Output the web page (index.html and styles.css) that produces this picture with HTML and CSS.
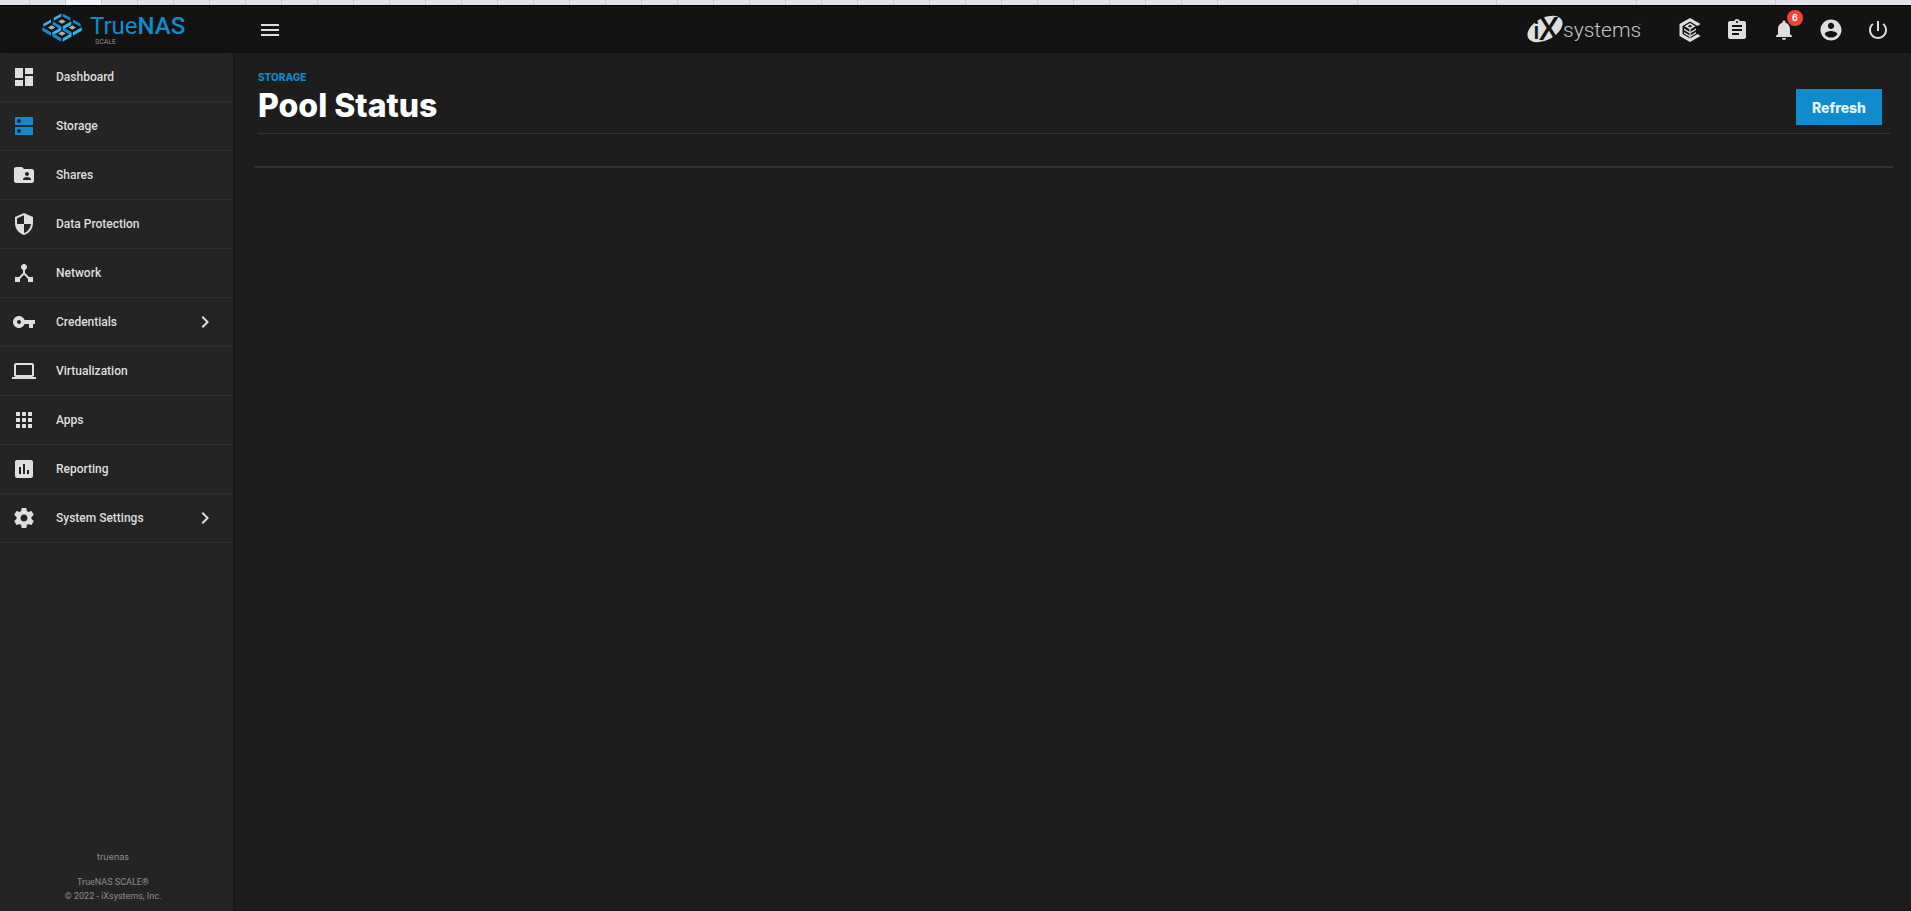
FILE: index.html
```html
<!DOCTYPE html>
<html lang="en">
<head>
  <meta charset="UTF-8" />
  <meta name="viewport" content="width=device-width, initial-scale=1.0"/>
  <title>TrueNAS - Pool Status</title>
  <link rel="stylesheet" href="styles.css">
</head>
<body>
  <div class="tab-strip" aria-hidden="true">
    <i></i><i></i><i class="current"></i><i></i><i></i><i></i><i></i><i></i><i></i><i></i>
    <i></i><i></i><i></i><i></i><i></i><i></i><i></i><i></i><i></i><i></i>
    <i></i><i></i><i></i><i></i><i></i><i></i><i></i><i></i><i></i><i></i>
    <i></i><i></i><i></i><i></i><i></i><i></i><i></i><i></i><i></i>
  </div>

  <header class="topbar">
    <a class="brand" href="#" aria-label="TrueNAS SCALE">
      <svg class="brand-mark" viewBox="0 0 120 86">
        <defs>
          <g id="cell">
            <path fill="#118ed3" d="M-28-1-2 14v11L-28 10z"/>
            <path fill="#31b6ea" d="M28-1 2 14v11l26-15z"/>
            <path fill="#aeadae" d="M0-7 11 0 0 7-11 0z"/>
          </g>
        </defs>
        <path fill="#31b6ea" d="M35 23 58 10V1L35 14zM4 41l23-13v-9L4 32z"/>
        <path fill="#118ed3" d="M85 23 62 10V1l23 13zM116 41 93 28v-9l23 13z"/>
        <use href="#cell" x="60" y="25"/>
        <use href="#cell" x="29" y="43"/>
        <use href="#cell" x="91" y="43"/>
        <use href="#cell" x="60" y="61"/>
      </svg>
      <span class="brand-text">
        <span class="brand-name">True<b>NAS</b></span>
        <span class="brand-edition">SCALE</span>
      </span>
    </a>
    <button class="icon-btn menu-btn" aria-label="Toggle menu">
      <svg viewBox="0 0 24 24"><path d="M3 18h18v-2H3v2zm0-5h18v-2H3v2zm0-7v2h18V6H3z"/></svg>
    </button>

    <div class="top-actions">
      <a class="ix-logo" href="#" aria-label="iXsystems">
        <svg viewBox="0 0 118 32">
          <ellipse cx="18" cy="15" rx="19" ry="11" transform="rotate(-28 18 15)" fill="#dedede"/>
          <text class="ix-i" x="6" y="25">i</text>
          <text class="ix-x" x="12" y="26">X</text>
          <text class="ix-word" x="36" y="23">systems</text>
          <text class="ix-tm" x="111" y="13">™</text>
        </svg>
      </a>
      <button class="icon-btn" aria-label="TrueCommand">
        <svg viewBox="0 0 24 24">
          <path d="M12 0 1.500 6v12L12 24l10.500-6-3-2L12 20.500 4.500 16V8L12 3.500 19.500 8l3-2z"/>
          <path d="M12 5 6.500 8.200 12 11.500l5.500-3.300zm0 1.800 2.300 1.400L12 9.600 9.700 8.200z" fill-rule="evenodd"/>
          <path d="M6 10.500l5.300 3.200v1.600L6 12.100zM6 14l5.300 3.200v1.600L6 15.600zM18 10.500l-5.300 3.200v1.600l5.300-3.200zM18 14l-5.300 3.200v1.600l5.300-3.200zM11.400 11h1.200v9h-1.200z"/>
        </svg>
      </button>
      <button class="icon-btn" aria-label="Task manager">
        <svg viewBox="0 0 24 24"><path d="M19 3h-4.180C14.400 1.840 13.300 1 12 1c-1.300 0-2.400.84-2.820 2H5c-1.100 0-2 .9-2 2v14c0 1.100.9 2 2 2h14c1.100 0 2-.9 2-2V5c0-1.100-.9-2-2-2zm-7 0c.55 0 1 .45 1 1s-.45 1-1 1-1-.45-1-1 .45-1 1-1zm2 14H7v-2h7v2zm3-4H7v-2h10v2zm0-4H7V7h10v2z"/></svg>
      </button>
      <button class="icon-btn" aria-label="Alerts">
        <svg viewBox="0 0 24 24"><path d="M12 22c1.100 0 2-.9 2-2h-4c0 1.100.89 2 2 2zm6-6v-5c0-3.070-1.640-5.640-4.500-6.320V4c0-.83-.67-1.500-1.500-1.500s-1.500.67-1.500 1.500v.68C7.630 5.360 6 7.920 6 11v5l-2 2v1h16v-1l-2-2z"/></svg>
        <span class="badge">6</span>
      </button>
      <button class="icon-btn" aria-label="Account">
        <svg viewBox="0 0 24 24"><path transform="translate(-.6 -.6) scale(1.050)" d="M12 2C6.480 2 2 6.480 2 12s4.480 10 10 10 10-4.480 10-10S17.520 2 12 2zm0 3c1.660 0 3 1.340 3 3s-1.340 3-3 3-3-1.340-3-3 1.340-3 3-3zm0 14.200c-2.500 0-4.710-1.280-6-3.220.03-1.990 4-3.080 6-3.080 1.990 0 5.970 1.090 6 3.080-1.290 1.940-3.500 3.220-6 3.220z"/></svg>
      </button>
      <button class="icon-btn" aria-label="Power">
        <svg viewBox="0 0 24 24"><path d="M13 3h-2v10h2V3zm4.830 2.170l-1.420 1.420C17.990 7.860 19 9.810 19 12c0 3.870-3.130 7-7 7s-7-3.130-7-7c0-2.190 1.010-4.140 2.580-5.420L6.170 5.170C4.230 6.820 3 9.260 3 12c0 4.970 4.030 9 9 9s9-4.030 9-9c0-2.740-1.230-5.180-3.170-6.830z"/></svg>
      </button>
    </div>
  </header>

  <div class="layout">
    <aside class="sidebar">
      <nav>
        <a class="nav-item" href="#">
          <svg viewBox="0 0 24 24"><path d="M3 13h8V3H3v10zm0 8h8v-6H3v6zm10 0h8V11h-8v10zm0-18v6h8V3h-8z"/></svg>
          <span>Dashboard</span>
        </a>
        <a class="nav-item active" href="#">
          <svg viewBox="0 0 24 24"><path d="M20 13H4c-.55 0-1 .45-1 1v6c0 .55.45 1 1 1h16c.55 0 1-.45 1-1v-6c0-.55-.45-1-1-1zM7 19c-1.100 0-2-.9-2-2s.9-2 2-2 2 .9 2 2-.9 2-2 2zM20 3H4c-.55 0-1 .45-1 1v6c0 .55.45 1 1 1h16c.55 0 1-.45 1-1V4c0-.55-.45-1-1-1zM7 9c-1.100 0-2-.9-2-2s.9-2 2-2 2 .9 2 2-.9 2-2 2z"/></svg>
          <span>Storage</span>
        </a>
        <a class="nav-item" href="#">
          <svg viewBox="0 0 24 24"><path d="M20 6h-8l-2-2H4c-1.100 0-1.990.9-1.990 2L2 18c0 1.100.9 2 2 2h16c1.100 0 2-.9 2-2V8c0-1.100-.9-2-2-2zm-5 3c1.100 0 2 .9 2 2s-.9 2-2 2-2-.9-2-2 .9-2 2-2zm4 8h-8v-1c0-1.330 2.670-2 4-2s4 .67 4 2v1z"/></svg>
          <span>Shares</span>
        </a>
        <a class="nav-item" href="#">
          <svg viewBox="0 0 24 24"><path d="M12 1L3 5v6c0 5.550 3.840 10.740 9 12 5.160-1.260 9-6.450 9-12V5l-9-4zm0 10.990h7c-.53 4.120-3.280 7.790-7 8.940V12H5V6.300l7-3.110v8.800z"/></svg>
          <span>Data Protection</span>
        </a>
        <a class="nav-item" href="#">
          <svg viewBox="0 0 24 24"><path d="M17 16l-4-4V8.820C14.160 8.400 15 7.300 15 6c0-1.660-1.340-3-3-3S9 4.340 9 6c0 1.300.84 2.400 2 2.820V12l-4 4H3v5h5v-3.050l4-4.200 4 4.200V21h5v-5h-4z"/></svg>
          <span>Network</span>
        </a>
        <a class="nav-item" href="#">
          <svg viewBox="0 0 24 24"><path d="M12.650 10C11.830 7.670 9.610 6 7 6c-3.310 0-6 2.690-6 6s2.690 6 6 6c2.610 0 4.830-1.670 5.650-4H17v4h4v-4h2v-4H12.650zM7 14c-1.100 0-2-.9-2-2s.9-2 2-2 2 .9 2 2-.9 2-2 2z"/></svg>
          <span>Credentials</span>
          <svg class="chevron" viewBox="0 0 24 24"><path d="M10 6L8.590 7.410 13.170 12l-4.580 4.590L10 18l6-6z"/></svg>
        </a>
        <a class="nav-item" href="#">
          <svg viewBox="0 0 24 24"><path d="M20 18c1.100 0 1.990-.9 1.990-2L22 6c0-1.100-.9-2-2-2H4c-1.100 0-2 .9-2 2v10c0 1.100.9 2 2 2H0v2h24v-2h-4zM4 6h16v10H4V6z"/></svg>
          <span>Virtualization</span>
        </a>
        <a class="nav-item" href="#">
          <svg viewBox="0 0 24 24"><path d="M4 8h4V4H4v4zm6 12h4v-4h-4v4zm-6 0h4v-4H4v4zm0-6h4v-4H4v4zm6 0h4v-4h-4v4zm6-10v4h4V4h-4zm-6 4h4V4h-4v4zm6 6h4v-4h-4v4zm0 6h4v-4h-4v4z"/></svg>
          <span>Apps</span>
        </a>
        <a class="nav-item" href="#">
          <svg viewBox="0 0 24 24"><path d="M19 3H5c-1.100 0-2 .9-2 2v14c0 1.100.9 2 2 2h14c1.100 0 2-.9 2-2V5c0-1.100-.9-2-2-2zM9 17H7v-7h2v7zm4 0h-2V7h2v10zm4 0h-2v-4h2v4z"/></svg>
          <span>Reporting</span>
        </a>
        <a class="nav-item" href="#">
          <svg viewBox="0 0 24 24"><path d="M19.430 12.980c.04-.32.07-.64.07-.98s-.03-.66-.07-.98l2.110-1.650c.19-.15.24-.42.12-.64l-2-3.460c-.12-.22-.39-.3-.61-.22l-2.490 1c-.52-.4-1.080-.73-1.690-.98l-.38-2.650C14.460 2.180 14.250 2 14 2h-4c-.25 0-.46.18-.49.42l-.38 2.650c-.61.25-1.170.59-1.690.98l-2.490-1c-.23-.09-.49 0-.61.22l-2 3.460c-.13.22-.07.49.12.64l2.110 1.650c-.04.32-.07.65-.07.98s.03.66.07.98l-2.110 1.650c-.19.15-.24.42-.12.64l2 3.460c.12.22.39.3.61.22l2.490-1c.52.4 1.080.73 1.690.98l.38 2.650c.03.24.24.42.49.42h4c.25 0 .46-.18.49-.42l.38-2.650c.61-.25 1.170-.59 1.690-.98l2.490 1c.23.09.49 0 .61-.22l2-3.460c.12-.22.07-.49-.12-.64l-2.110-1.650zM12 15.500c-1.930 0-3.500-1.570-3.500-3.500s1.570-3.500 3.500-3.500 3.500 1.570 3.500 3.500-1.570 3.500-3.500 3.500z"/></svg>
          <span>System Settings</span>
          <svg class="chevron" viewBox="0 0 24 24"><path d="M10 6L8.590 7.410 13.170 12l-4.580 4.590L10 18l6-6z"/></svg>
        </a>
      </nav>
      <footer class="copyright">
        <p class="hostname">truenas</p>
        <p>TrueNAS SCALE®</p>
        <p>© 2022 - iXsystems, Inc.</p>
      </footer>
    </aside>

    <main class="content">
      <div class="page-header">
        <div>
          <a class="breadcrumb" href="#">STORAGE</a>
          <h1>Pool Status</h1>
        </div>
        <button class="refresh-btn">Refresh</button>
      </div>
      <hr class="divider">
    </main>
  </div>
</body>
</html>
```
FILE: styles.css
```css
* {
  box-sizing: border-box;
}

body {
  margin: 0;
  min-height: 100vh;
  display: flex;
  flex-direction: column;
  background: #1d1d1d;
  color: #dedede;
  font-family: Roboto, sans-serif;
  font-size: 12px;
}

a {
  color: inherit;
  text-decoration: none;
}

svg {
  display: block;
  fill: currentColor;
}

/* strip above the top bar */
.tab-strip {
  display: grid;
  grid-template-columns: 30px repeat(33, 36px) repeat(2, 140px 139px) 1fr;
  height: 5px;
  overflow: hidden;
  background: #e1e5ea;
}

.tab-strip i {
  border-right: 1px solid #c9ccd1;
}

.tab-strip i:last-child {
  border-right: none;
}

.tab-strip .current {
  background: #f2f5fb;
}

/* top bar */
.topbar {
  display: flex;
  align-items: center;
  height: 48px;
  padding-right: 10px;
  background: #131313;
  border-top: 1px solid #000;
}

.brand {
  display: flex;
  align-items: flex-start;
  gap: 8px;
  width: 234px;
  height: 40px;
  padding-left: 42px;
}

.brand-mark {
  width: 40px;
  height: 29px;
  margin-top: 3px;
}

.brand-text {
  display: flex;
  flex-direction: column;
}

.brand-name {
  color: #0f8bce;
  font-size: 24px;
  line-height: 32px;
  font-weight: 400;
}

.brand-name b {
  font-weight: 500;
}

.brand-edition {
  margin-top: -4px;
  padding-left: 5px;
  color: #8e8e8e;
  font-size: 7px;
  line-height: 8px;
}

.icon-btn {
  position: relative;
  display: flex;
  flex: none;
  align-items: center;
  justify-content: center;
  width: 47px;
  height: 40px;
  padding: 0;
  border: none;
  background: none;
  color: #dedede;
  cursor: pointer;
}

.icon-btn svg {
  width: 24px;
  height: 24px;
}

.menu-btn {
  margin-left: 12px;
}

.top-actions {
  display: flex;
  align-items: center;
  margin-left: auto;
}

.ix-logo {
  margin-right: 21px;
}

.ix-logo svg {
  width: 118px;
  height: 32px;
  overflow: visible;
}

.ix-i,
.ix-x {
  fill: #131313;
  font-family: "Open Sans", sans-serif;
  font-size: 24px;
  font-weight: 600;
}

.ix-x {
  font-size: 32px;
}

.ix-word {
  fill: #c4c4c4;
  font-size: 21px;
  font-weight: 300;
}

.ix-tm {
  fill: #8e8e8e;
  font-size: 5px;
}

.badge {
  position: absolute;
  top: 0;
  right: 4px;
  width: 16px;
  height: 16px;
  border-radius: 50%;
  background: #f44336;
  color: #fff;
  font: 600 9px/16px Inter, sans-serif;
  text-align: center;
}

/* sidebar */
.layout {
  display: flex;
  flex: 1;
}

.sidebar {
  display: flex;
  flex-direction: column;
  justify-content: space-between;
  width: 233px;
  background: #242424;
  box-shadow: 0 0 4px rgba(0,0,0,0.4);
}

.nav-item {
  display: flex;
  align-items: center;
  gap: 20px;
  height: 49px;
  padding: 0 16px 0 12px;
  border-bottom: 1px solid #303030;
  font-weight: 500;
}

.nav-item svg {
  width: 24px;
  height: 24px;
}

.nav-item.active svg {
  color: #0f8bce;
}

.nav-item .chevron {
  margin-left: auto;
}

.copyright {
  padding: 0 7px 8px 0;
  color: #8e8e8e;
  font-size: 9px;
  line-height: 14px;
  text-align: center;
}

.copyright p {
  margin: 0;
}

.copyright .hostname {
  margin-bottom: 11px;
  font-family: Inter, sans-serif;
}

/* page */
.content {
  flex: 1;
  padding: 16px 18px 0 22px;
}

.page-header {
  display: flex;
  align-items: flex-end;
  justify-content: space-between;
  margin: 0 3px;
  padding: 0 8px 8px 0;
  border-bottom: 1px solid #333;
  font-family: Inter, sans-serif;
}

.breadcrumb {
  display: block;
  color: #0f8bce;
  font-size: 10px;
  line-height: 17px;
  font-weight: 800;
}

h1 {
  margin: 0;
  color: #fff;
  font-size: 32px;
  line-height: 39px;
  font-weight: 800;
}

.refresh-btn {
  height: 36px;
  padding: 0 16px;
  border: none;
  background: #0f8bce;
  color: #e6f3fb;
  font-family: Inter, sans-serif;
  font-size: 14px;
  font-weight: 800;
  cursor: pointer;
}

.divider {
  height: 2px;
  margin: 32px 0 0;
  border: none;
  background: #333;
}
```
